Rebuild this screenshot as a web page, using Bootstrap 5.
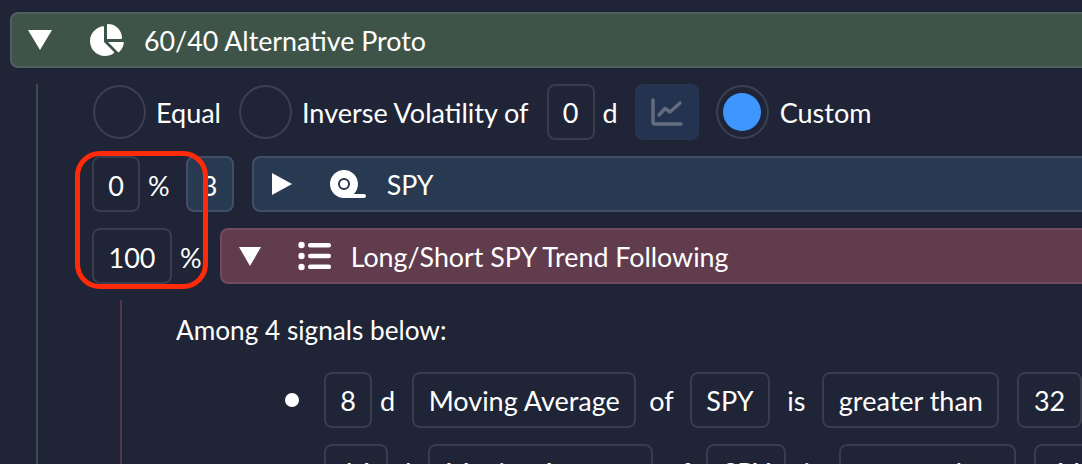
<!DOCTYPE html>
<html lang="en">
  <head>
    <meta charset="UTF-8" />
    <meta name="viewport" content="width=device-width, initial-scale=1.0" />
    <title>60/40 Alternative Proto</title>
    <link href="https://cdn.jsdelivr.net/npm/bootstrap@5.3.2/dist/css/bootstrap.min.css" rel="stylesheet" />
    <style>
      html, body { height: 100%; overflow: hidden; }
      body { background: #1f2536; color: #fff; font-family: Lato, "Open Sans", sans-serif; font-size: 27px; line-height: 1; }
      .sym-page { position: relative; width: 1500px; height: 464px; overflow: hidden; padding: 12px 0 0 10px; }
      .sym-row { height: 56px; white-space: nowrap; }
      .sym-row + .sym-row { margin-top: 16px; }
      .sym-txt { position: relative; top: 1px; }
      .sym-bar { height: 56px; flex: 1 1 auto; border: 2px solid; border-radius: 8px; white-space: nowrap; }
      .sym-bar .sym-txt { font-size: 26.8px; }
      .sym-bar-green { background: #3f5449; border-color: #505f5f; }
      .sym-bar-blue { background: #283a51; border-color: #414e66; }
      .sym-bar-red { background: #613c4d; border-color: #724a5f; }
      .sym-box { height: 56px; padding: 2px 14.5px 0; border: 2px solid #383c4d; border-radius: 8px; display: inline-flex; align-items: center; justify-content: center; }
      .sym-box-one { width: 48px; padding-left: 0; padding-right: 0; }
      .sym-box-blue { background: #283a51; border-color: #414e66; }
      .sym-radio { width: 53px; height: 54px; border: 2px solid #3c4050; border-radius: 50%; flex: none; }
      .sym-radio-on { display: flex; align-items: center; justify-content: center; }
      .sym-radio-on span { width: 38px; height: 38px; background: #4096ff; border-radius: 50%; }
      .sym-chart-btn { width: 64px; height: 56px; background: #233350; border: 2px solid #27344e; border-radius: 8px; }
      .sym-branch { border-left: 2px solid #3a4b49; margin: 24px 0 0 26px; padding-left: 54px; }
      .sym-branch > .sym-row:first-child { margin-top: -8px; }
      .sym-branch-red { border-left-color: #57364a; margin-left: 28px; padding-left: 53px; }
      .sym-among { font-size: 26.2px; top: 2px; margin-left: 1px; }
      .sym-top .sym-txt { top: 0; }
      .sym-top .sym-box { padding-top: 0; }
      .sym-signal { padding-left: 110px; }
      .sym-dot { width: 14px; height: 14px; background: #fff; border-radius: 50%; flex: none; margin-right: 25px; }
      .sym-dot-off { visibility: hidden; }
      .sym-highlight { position: absolute; left: 75px; top: 151px; width: 133px; height: 138px; border: 5px solid #ff2a0a; border-radius: 25px; pointer-events: none; }
      .sym-m1 { margin-left: 1px; }
      .sym-m8 { margin-left: 8px; }
      .sym-m10 { margin-left: 10px; }
      .sym-m11 { margin-left: 11px; }
      .sym-m13 { margin-left: 13px; }
      .sym-m16 { margin-left: 16px; }
      .sym-m17 { margin-left: 17px; }
      .sym-m18 { margin-left: 18px; }
      .sym-pie { margin: 0 20px 0 36px; }
      .sym-tape { margin: 0 21px 0 38px; }
      .sym-list { margin: 0 20px 0 37px; }
    </style>
  </head>
  <body>
    <div class="sym-page">
      <div class="d-flex align-items-center sym-bar sym-bar-green">
        <svg class="ms-3" width="24" height="20" viewBox="0 0 24 20"><polygon points="0,0 24,0 12,20" fill="#fff" /></svg>
        <svg class="sym-pie" width="36" height="32" viewBox="0 0 576 512" fill="#fff"><path d="M304 240V16.6c0-9 7-16.6 16-16.6C443.7 0 544 100.3 544 224c0 9-7.6 16-16.6 16H304zM32 272C32 150.7 122.1 50.3 239 34.3c9.2-1.3 17 6.1 17 15.4V288L412.5 444.5c6.7 6.7 6.2 17.7-1.5 23.1C371.8 495.6 323.8 512 272 512C139.5 512 32 404.6 32 272zm526.4 16c9.3 0 16.6 7.8 15.4 17c-7.7 55.9-34.6 105.6-73.9 142.3c-6 5.6-15.4 5.2-21.2-.7L320 288H558.4z" /></svg>
        <span class="sym-txt">60/40 Alternative Proto</span>
      </div>

      <div class="sym-branch">
        <div class="d-flex align-items-center sym-row sym-top">
          <span class="sym-radio sym-m1"></span>
          <span class="sym-txt sym-m10">Equal</span>
          <span class="sym-radio sym-m18"></span>
          <span class="sym-txt sym-m10">Inverse Volatility of</span>
          <span class="sym-box sym-box-one sym-m18">0</span>
          <span class="sym-txt sym-m8">d</span>
          <span class="sym-chart-btn d-flex align-items-center justify-content-center sym-m17">
            <svg width="32" height="29" viewBox="0 0 32 29" fill="none" stroke="#646c7f" stroke-width="3.4" stroke-linecap="round" stroke-linejoin="round"><path d="M2 2V24a2 2 0 0 0 2 2H30" /><path d="M8 17L14 10.5L19 14L29 5" /></svg>
          </span>
          <span class="sym-radio sym-radio-on sym-m17"><span></span></span>
          <span class="sym-txt sym-m11">Custom</span>
        </div>
        <div class="d-flex align-items-center sym-row">
          <span class="sym-box sym-box-one">0</span>
          <span class="sym-txt sym-m8">%</span>
          <span class="sym-box sym-box-one sym-box-blue sym-m16">3</span>
          <div class="d-flex align-items-center sym-bar sym-bar-blue sym-m18">
            <svg class="sym-m18" width="20" height="22" viewBox="0 0 20 22"><polygon points="0,0 20,11 0,22" fill="#fff" /></svg>
            <svg class="sym-tape" width="36" height="32" viewBox="0 0 576 512" fill="#fff"><path d="M380.8 416c41.5-40.7 67.2-97.3 67.2-160C448 132.3 347.7 32 224 32S0 132.3 0 256S100.3 480 224 480H544c17.7 0 32-14.3 32-32s-14.3-32-32-32H380.8zM224 160a96 96 0 1 1 0 192 96 96 0 1 1 0-192zm64 96a64 64 0 1 0 -128 0 64 64 0 1 0 128 0z" /></svg>
            <span class="sym-txt">SPY</span>
          </div>
        </div>
        <div class="d-flex align-items-center sym-row">
          <span class="sym-box">100</span>
          <span class="sym-txt sym-m8">%</span>
          <div class="d-flex align-items-center sym-bar sym-bar-red sym-m18">
            <svg class="sym-m17" width="22" height="19" viewBox="0 0 22 19"><polygon points="0,0 22,0 11,19" fill="#fff" /></svg>
            <svg class="sym-list" width="33" height="30" viewBox="0 0 33 30" fill="#fff"><circle cx="3.5" cy="4" r="3.2" /><circle cx="3.5" cy="15" r="3.2" /><circle cx="3.5" cy="26" r="3.2" /><rect x="10" y="2" width="23" height="4.5" rx="2.2" /><rect x="10" y="12.8" width="23" height="4.5" rx="2.2" /><rect x="10" y="23.6" width="23" height="4.5" rx="2.2" /></svg>
            <span class="sym-txt">Long/Short SPY Trend Following</span>
          </div>
        </div>

        <div class="sym-branch sym-branch-red">
          <div class="d-flex align-items-center sym-row"><span class="sym-txt sym-among">Among 4 signals below:</span></div>
          <div class="d-flex align-items-center sym-row sym-signal sym-top">
            <span class="sym-dot"></span>
            <span class="sym-box sym-box-one">8</span>
            <span class="sym-txt sym-m8">d</span>
            <span class="sym-box sym-m17">Moving Average</span>
            <span class="sym-txt sym-m13">of</span>
            <span class="sym-box sym-m16">SPY</span>
            <span class="sym-txt sym-m17">is</span>
            <span class="sym-box sym-m17">greater than</span>
            <span class="sym-box sym-m18">32</span>
          </div>
          <div class="d-flex align-items-center sym-row sym-signal sym-top">
            <span class="sym-dot sym-dot-off"></span>
            <span class="sym-box">16</span>
            <span class="sym-txt sym-m8">d</span>
            <span class="sym-box sym-m17">Moving Average</span>
            <span class="sym-txt sym-m13">of</span>
            <span class="sym-box sym-m16">SPY</span>
            <span class="sym-txt sym-m17">is</span>
            <span class="sym-box sym-m17">greater than</span>
            <span class="sym-box sym-m18">64</span>
          </div>
        </div>
      </div>

      <div class="sym-highlight"></div>
    </div>
    <script src="https://cdn.jsdelivr.net/npm/bootstrap@5.3.2/dist/js/bootstrap.bundle.min.js"></script>
  </body>
</html>
